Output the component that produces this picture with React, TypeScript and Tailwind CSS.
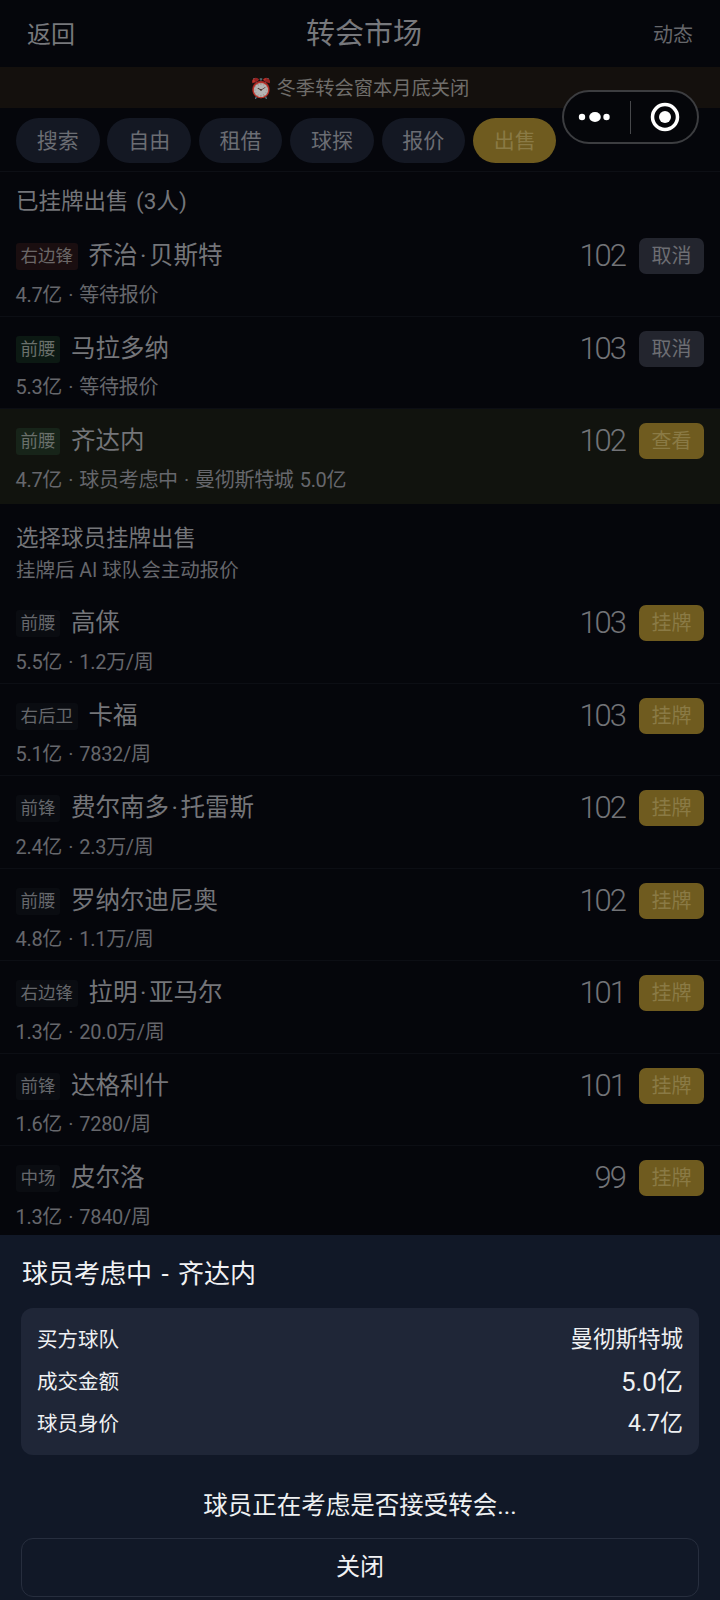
import React from "react";

const font = { fontFamily: 'Roboto, "Noto Sans CJK SC", sans-serif' };

const tabs = ["搜索", "自由", "租借", "球探", "报价", "出售"];

type Row = {
  pos: string;
  tone: "red" | "green" | "plain";
  name: string;
  ovr: number;
  sub: string;
  action: string;
  gold?: boolean;
  hot?: boolean;
};

const listed: Row[] = [
  { pos: "右边锋", tone: "red", name: "乔治·贝斯特", ovr: 102, sub: "4.7亿 · 等待报价", action: "取消" },
  { pos: "前腰", tone: "green", name: "马拉多纳", ovr: 103, sub: "5.3亿 · 等待报价", action: "取消" },
  { pos: "前腰", tone: "green", name: "齐达内", ovr: 102, sub: "4.7亿 · 球员考虑中 · 曼彻斯特城 5.0亿", action: "查看", gold: true, hot: true },
];

const squad: Row[] = [
  { pos: "前腰", tone: "plain", name: "高俫", ovr: 103, sub: "5.5亿 · 1.2万/周", action: "挂牌", gold: true },
  { pos: "右后卫", tone: "plain", name: "卡福", ovr: 103, sub: "5.1亿 · 7832/周", action: "挂牌", gold: true },
  { pos: "前锋", tone: "plain", name: "费尔南多·托雷斯", ovr: 102, sub: "2.4亿 · 2.3万/周", action: "挂牌", gold: true },
  { pos: "前腰", tone: "plain", name: "罗纳尔迪尼奥", ovr: 102, sub: "4.8亿 · 1.1万/周", action: "挂牌", gold: true },
  { pos: "右边锋", tone: "plain", name: "拉明·亚马尔", ovr: 101, sub: "1.3亿 · 20.0万/周", action: "挂牌", gold: true },
  { pos: "前锋", tone: "plain", name: "达格利什", ovr: 101, sub: "1.6亿 · 7280/周", action: "挂牌", gold: true },
  { pos: "中场", tone: "plain", name: "皮尔洛", ovr: 99, sub: "1.3亿 · 7840/周", action: "挂牌", gold: true },
];

const toneClass = {
  red: "bg-[#1a0e10] text-[#6b6767]",
  green: "bg-[#0c1913] text-[#6a706b]",
  plain: "bg-[#0a0c11] text-[#66686c]",
};

// the dot between first and last name sits wider than the font's own
const PlayerName = ({ name }: { name: string }) => {
  const [first, last] = name.split("·");
  if (!last) return <>{name}</>;
  return (
    <>
      {first}
      <span className="mx-[2.5px]">·</span>
      {last}
    </>
  );
};

const PlayerRow = ({ row }: { row: Row }) => (
  <div
    className={`shrink-0 pl-4 pr-4 flex flex-col pt-[14px] border-b ${
      row.hot ? "h-[95px] bg-[#11130e] border-[#11130e]" : "h-[92.5px] border-[#0c0e14]"
    }`}
  >
    <div className="flex items-center h-[37px]">
      <span
        className={`px-[4.5px] h-[27px] leading-[27px] rounded-[3px] text-[17.5px] ${
          row.hot ? "bg-[#172419] text-[#6a706b]" : toneClass[row.tone]
        }`}
      >
        {row.pos}
      </span>
      <span className="ml-[11px] text-[24.5px] text-[#747579]">
        <PlayerName name={row.name} />
      </span>
      <span className="ml-auto text-[31px] font-light tracking-[-2px] text-[#727377]">{row.ovr}</span>
      <span
        className={`ml-[14px] -mt-[1px] w-[65px] h-[36px] rounded-[7px] text-center text-[20px] leading-[36px] ${
          row.gold ? "bg-[#6f5b1f] text-[#8a7a45]" : "bg-[#23252e] text-[#6d6e73]"
        }`}
      >
        {row.action}
      </span>
    </div>
    <div className="mt-[6.5px] -ml-[0.5px] text-[20px] leading-[26px] tracking-[-0.3px] [word-spacing:1.5px] text-[#66676c]">
      {row.sub}
    </div>
  </div>
);

export default function App() {
  return (
    <div className="relative w-[720px] h-[1600px] bg-[#05060b] flex flex-col overflow-hidden" style={font}>
      {/* top bar */}
      <div className="h-[67px] shrink-0 px-[27px] pt-[2px] flex justify-between items-center">
        <span className="text-[24px] text-[#77787c]">返回</span>
        <span className="text-[29px] text-[#77787c]">转会市场</span>
        <span className="text-[20px] text-[#66676b]">动态</span>
      </div>

      <div className="h-[41px] shrink-0 bg-[#14100d] pt-[4px] pr-[2px] flex items-center justify-center text-[19.3px] text-[#6f6d6a]">
        <span className="opacity-70 mr-[4px]">⏰</span>
        冬季转会窗本月底关闭
      </div>

      <div className="h-[64px] shrink-0 pt-[10px] pl-4 flex gap-[7.9px] border-b border-[#0d0f15]">
        {tabs.map((t) => (
          <div
            key={t}
            className={`w-[83.5px] h-[45px] pt-[1px] rounded-full text-center text-[21px] leading-[45px] ${
              t === "出售" ? "bg-[#6f5b1f] text-[#8a7a45]" : "bg-[#141823] text-[#6b6d73]"
            }`}
          >
            {t}
          </div>
        ))}
      </div>

      <div className="flex-1 min-h-0 overflow-hidden flex flex-col">
        <div className="h-[52px] shrink-0 pl-4 pt-[8px] flex items-center text-[22.5px] [word-spacing:2px] text-[#747579]">
          已挂牌出售 (3人)
        </div>
        {listed.map((r) => (
          <PlayerRow key={r.name} row={r} />
        ))}
        <div className="h-[87px] shrink-0 pl-4 pt-[15.5px]">
          <div className="text-[22.5px] leading-[36px] text-[#747579]">选择球员挂牌出售</div>
          <div className="text-[19.5px] leading-[30px] text-[#66676c]">挂牌后 AI 球队会主动报价</div>
        </div>
        {squad.map((r) => (
          <PlayerRow key={r.name} row={r} />
        ))}
      </div>

      {/* bottom sheet */}
      <div className="h-[365px] shrink-0 bg-[#111827] px-[21px] flex flex-col">
        <div className="h-[73px] shrink-0 pl-[1px] pt-[6px] flex items-center text-[26px] [word-spacing:3px] text-[#f1f2f4]">
          球员考虑中 - 齐达内
        </div>
        <div className="h-[147px] shrink-0 bg-[#1f2637] rounded-[12px] px-4 pt-[11px]">
          <div className="h-[42px] flex items-center justify-between text-[#eef0f2]">
            <span className="text-[20.5px]">买方球队</span>
            <span className="text-[22.5px]">曼彻斯特城</span>
          </div>
          <div className="h-[42px] flex items-center justify-between text-[#eef0f2]">
            <span className="text-[20.5px]">成交金额</span>
            <span className="text-[26px]">5.0亿</span>
          </div>
          <div className="h-[43px] flex items-center justify-between text-[#eef0f2]">
            <span className="text-[20.5px]">球员身价</span>
            <span className="text-[23px]">4.7亿</span>
          </div>
        </div>
        <div className="h-[83px] shrink-0 pt-[20px] flex items-center justify-center text-[24.5px] text-[#eef0f2]">
          球员正在考虑是否接受转会...
        </div>
        <div className="h-[59px] shrink-0 border border-[#272e3e] rounded-[12px] pb-[2px] flex items-center justify-center text-[24px] text-[#f1f2f4]">
          关闭
        </div>
      </div>

      {/* wechat capsule */}
      <div className="absolute left-[562px] top-[90px] w-[137px] h-[54px] rounded-full border-2 border-[#3c3d40] bg-[#05060a] flex items-center">
        <svg width="66" height="50" viewBox="0 0 66 50" className="shrink-0">
          <circle cx="18" cy="25" r="3.2" fill="#fff" />
          <ellipse cx="31" cy="25" rx="5.8" ry="5" fill="#fff" />
          <circle cx="42.5" cy="25" r="3.2" fill="#fff" />
        </svg>
        <div className="w-px h-[33px] shrink-0 bg-[#47484b]" />
        <svg width="66" height="50" viewBox="0 0 66 50" className="shrink-0">
          <circle cx="34" cy="25" r="12.5" fill="none" stroke="#fff" strokeWidth="3.5" />
          <circle cx="34" cy="25" r="6" fill="#fff" />
        </svg>
      </div>
    </div>
  );
}
